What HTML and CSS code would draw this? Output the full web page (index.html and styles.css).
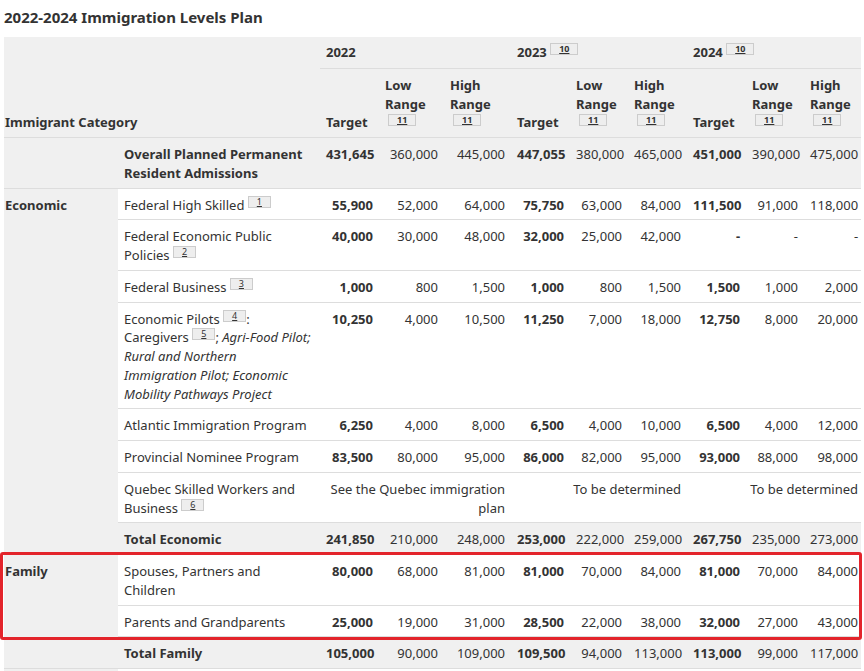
FILE: index.html
```html
<!DOCTYPE html>
<html lang="en">
<head>
<meta charset="utf-8">
<title>2022-2024 Immigration Levels Plan</title>
<link rel="stylesheet" href="styles.css">
</head>
<body>
<h2 class="title">2022-2024 Immigration Levels Plan</h2>
<table class="levels">
  <colgroup>
    <col class="c-cat"><col class="c-sub">
    <col class="c-t22"><col class="c-l22"><col class="c-h22">
    <col class="c-t23"><col class="c-l23"><col class="c-h23">
    <col class="c-t24"><col class="c-l24"><col class="c-h24">
  </colgroup>
  <thead>
    <tr class="years">
      <th class="cat-head" colspan="2" rowspan="2">Immigrant Category</th>
      <th colspan="3" class="year">2022</th>
      <th colspan="3" class="year">2023 <a class="fn">10</a></th>
      <th colspan="3" class="year">2024 <a class="fn">10</a></th>
    </tr>
    <tr class="subhead">
      <th>Target</th>
      <th>Low Range<br><a class="fn fn-head">11</a></th>
      <th>High Range<br><a class="fn fn-head">11</a></th>
      <th>Target</th>
      <th>Low Range<br><a class="fn fn-head">11</a></th>
      <th>High Range<br><a class="fn fn-head">11</a></th>
      <th>Target</th>
      <th>Low Range<br><a class="fn fn-head">11</a></th>
      <th class="last">High Range<br><a class="fn fn-head">11</a></th>
    </tr>
  </thead>
  <tbody>
    <tr class="total">
      <td class="cat"></td>
      <td class="label">Overall Planned Permanent Resident Admissions</td>
      <td class="num tgt">431,645</td><td class="num">360,000</td><td class="num">445,000</td>
      <td class="num tgt">447,055</td><td class="num">380,000</td><td class="num">465,000</td>
      <td class="num tgt">451,000</td><td class="num">390,000</td><td class="num last">475,000</td>
    </tr>
    <tr>
      <td class="cat" rowspan="8">Economic</td>
      <td>Federal High Skilled <a class="fn">1</a></td>
      <td class="num tgt">55,900</td><td class="num">52,000</td><td class="num">64,000</td>
      <td class="num tgt">75,750</td><td class="num">63,000</td><td class="num">84,000</td>
      <td class="num tgt">111,500</td><td class="num">91,000</td><td class="num last">118,000</td>
    </tr>
    <tr>
      <td>Federal Economic Public Policies <a class="fn">2</a></td>
      <td class="num tgt">40,000</td><td class="num">30,000</td><td class="num">48,000</td>
      <td class="num tgt">32,000</td><td class="num">25,000</td><td class="num">42,000</td>
      <td class="num tgt">-</td><td class="num">-</td><td class="num last">-</td>
    </tr>
    <tr>
      <td>Federal Business <a class="fn">3</a></td>
      <td class="num tgt">1,000</td><td class="num">800</td><td class="num">1,500</td>
      <td class="num tgt">1,000</td><td class="num">800</td><td class="num">1,500</td>
      <td class="num tgt">1,500</td><td class="num">1,000</td><td class="num last">2,000</td>
    </tr>
    <tr>
      <td>Economic Pilots <a class="fn">4</a>: Caregivers <a class="fn">5</a>; <em>Agri-Food Pilot; Rural and Northern<br>Immigration Pilot; Economic Mobility Pathways Project</em></td>
      <td class="num tgt">10,250</td><td class="num">4,000</td><td class="num">10,500</td>
      <td class="num tgt">11,250</td><td class="num">7,000</td><td class="num">18,000</td>
      <td class="num tgt">12,750</td><td class="num">8,000</td><td class="num last">20,000</td>
    </tr>
    <tr>
      <td>Atlantic Immigration Program</td>
      <td class="num tgt">6,250</td><td class="num">4,000</td><td class="num">8,000</td>
      <td class="num tgt">6,500</td><td class="num">4,000</td><td class="num">10,000</td>
      <td class="num tgt">6,500</td><td class="num">4,000</td><td class="num last">12,000</td>
    </tr>
    <tr>
      <td>Provincial Nominee Program</td>
      <td class="num tgt">83,500</td><td class="num">80,000</td><td class="num">95,000</td>
      <td class="num tgt">86,000</td><td class="num">82,000</td><td class="num">95,000</td>
      <td class="num tgt">93,000</td><td class="num">88,000</td><td class="num last">98,000</td>
    </tr>
    <tr>
      <td>Quebec Skilled Workers and Business <a class="fn">6</a></td>
      <td class="num" colspan="3">See the Quebec immigration plan</td>
      <td class="num" colspan="3">To be determined</td>
      <td class="num last" colspan="3">To be determined</td>
    </tr>
    <tr class="total">
      <td class="label">Total Economic</td>
      <td class="num tgt">241,850</td><td class="num">210,000</td><td class="num">248,000</td>
      <td class="num tgt">253,000</td><td class="num">222,000</td><td class="num">259,000</td>
      <td class="num tgt">267,750</td><td class="num">235,000</td><td class="num last">273,000</td>
    </tr>
    <tr>
      <td class="cat" rowspan="3">Family</td>
      <td>Spouses, Partners and Children</td>
      <td class="num tgt">80,000</td><td class="num">68,000</td><td class="num">81,000</td>
      <td class="num tgt">81,000</td><td class="num">70,000</td><td class="num">84,000</td>
      <td class="num tgt">81,000</td><td class="num">70,000</td><td class="num last">84,000</td>
    </tr>
    <tr>
      <td>Parents and Grandparents</td>
      <td class="num tgt">25,000</td><td class="num">19,000</td><td class="num">31,000</td>
      <td class="num tgt">28,500</td><td class="num">22,000</td><td class="num">38,000</td>
      <td class="num tgt">32,000</td><td class="num">27,000</td><td class="num last">43,000</td>
    </tr>
    <tr class="total">
      <td class="label">Total Family</td>
      <td class="num tgt">105,000</td><td class="num">90,000</td><td class="num">109,000</td>
      <td class="num tgt">109,500</td><td class="num">94,000</td><td class="num">113,000</td>
      <td class="num tgt">113,000</td><td class="num">99,000</td><td class="num last">117,000</td>
    </tr>
    <tr>
      <td class="cat">Refugees and Protected Persons</td>
      <td>Protected Persons in Canada and Dependents Abroad</td>
      <td class="num tgt">24,500</td><td class="num">19,000</td><td class="num">30,000</td>
      <td class="num tgt">24,500</td><td class="num">19,000</td><td class="num">30,000</td>
      <td class="num tgt">25,000</td><td class="num">20,000</td><td class="num last">30,000</td>
    </tr>
  </tbody>
</table>
<div class="highlight"></div>
</body>
</html>
```
FILE: styles.css
```css
html, body {
  margin: 0;
  padding: 0;
  background: #ffffff;
}

body {
  padding: 0 4px;
  font-family: "Noto Sans", "Open Sans", sans-serif;
  font-size: 13px;
  color: #333333;
}

.title {
  margin: 7px 0 10px;
  font-size: 15px;
  line-height: 20px;
  font-weight: 700;
  color: #333333;
}

.levels {
  border-collapse: collapse;
  table-layout: fixed;
  width: 857px;
}

.c-cat { width: 114px; }
.c-sub { width: 202px; }
.c-t22 { width: 59px; }
.c-l22 { width: 65px; }
.c-h22 { width: 67px; }
.c-t23 { width: 59px; }
.c-l23 { width: 58px; }
.c-h23 { width: 59px; }
.c-t24 { width: 59px; }
.c-l24 { width: 58px; }
.c-h24 { width: 57px; }

.levels th,
.levels td {
  padding: 7px 6px 5px;
  line-height: 18.75px;
  text-align: left;
  vertical-align: top;
  border-bottom: 1px solid #dddddd;
}

.levels thead th {
  background: #f0f0f0;
  font-weight: 700;
  vertical-align: bottom;
}

.levels thead .year {
  padding-top: 6px;
  padding-bottom: 6px;
  vertical-align: top;
}

.levels .cat-head {
  padding-left: 1px;
}

.levels td {
  background: #ffffff;
}

.levels td.cat {
  background: #f0f0f0;
  font-weight: 700;
  padding-left: 1px;
}

.levels tr.total td {
  background: #f0f0f0;
}

.levels td.label {
  font-weight: 700;
}

.levels .num {
  text-align: right;
}

.levels .tgt {
  font-weight: 700;
}

.levels .last {
  padding-right: 3px;
}

.levels em {
  font-style: italic;
}

.fn {
  display: inline-block;
  vertical-align: top;
  margin-top: 0;
  padding: 0 8px;
  border: 1px solid #cccccc;
  background: #eeeeee;
  font-size: 9px;
  line-height: 10px;
  color: #333333;
  text-decoration: underline;
}

.fn-head {
  margin-left: 3px;
  margin-top: 1px;
}

.highlight {
  position: absolute;
  left: 0;
  top: 552px;
  width: 862px;
  height: 88px;
  box-sizing: border-box;
  border: 3px solid #e3242b;
  border-radius: 3px;
  pointer-events: none;
}
```
